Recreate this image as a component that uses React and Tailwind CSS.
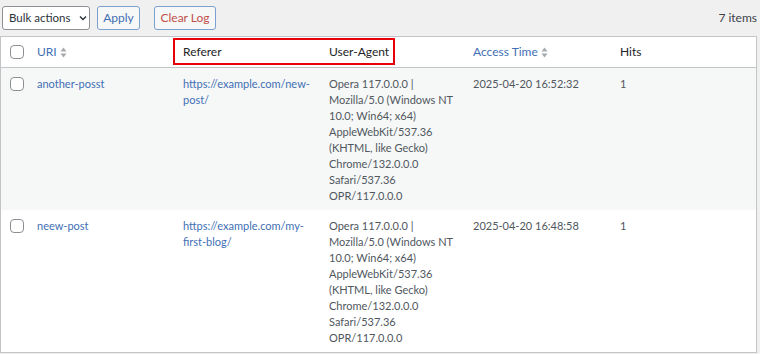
import React from "react";

const ua = [
  "Opera 117.0.0.0 |",
  "Mozilla/5.0 (Windows NT",
  "10.0; Win64; x64)",
  "AppleWebKit/537.36",
  "(KHTML, like Gecko)",
  "Chrome/132.0.0.0",
  "Safari/537.36",
  "OPR/117.0.0.0",
];

const rows = [
  { uri: "another-posst", ref: ["https://example.com/new-", "post/"], time: "2025-04-20 16:52:32", hits: "1", bg: "bg-[#f6f7f7]" },
  { uri: "neew-post", ref: ["https://example.com/my-", "first-blog/"], time: "2025-04-20 16:48:58", hits: "1", bg: "bg-white" },
];

function Check() {
  return <span className="block w-[14px] h-[14px] rounded-[4px] border border-[#8c8f94] bg-white" />;
}

function Sort() {
  return (
    <svg width="7" height="11" viewBox="0 0 7 11" className="inline-block ml-[3px]">
      <path d="M3.5 0.5 L6.5 4.5 H0.5 Z" fill="#a7aaad" />
      <path d="M3.5 10.5 L6.5 6.5 H0.5 Z" fill="#a7aaad" />
    </svg>
  );
}

export default function App() {
  return (
    <div className="w-[760px] h-[354px] overflow-hidden bg-[#f0f0f1] text-[#50575e]" style={{ fontFamily: "Lato, 'Liberation Sans', sans-serif" }}>
      <div className="flex items-center h-[36px] pl-[2px] pr-[3px]">
        <div className="flex items-center w-[88px] h-[24px] border border-[#8c8f94] rounded-[3px] bg-white pl-[6px] text-[11.5px] text-[#2c3338]">
          <span>Bulk actions</span>
          <svg width="8" height="6" viewBox="0 0 8 6" className="ml-[9px]"><path d="M1 1.5 L4 4.5 L7 1.5" stroke="#2c3338" strokeWidth="1.4" fill="none" /></svg>
        </div>
        <div className="ml-[7px] flex items-center justify-center w-[43px] h-[24px] border border-[#7b9fd0] rounded-[3px] bg-[#f6f7f7] text-[12px] text-[#3f6fb4]">Apply</div>
        <div className="ml-[14px] flex items-center justify-center w-[62px] h-[24px] border border-[#7b9fd0] rounded-[3px] bg-[#f6f7f7] text-[12px] text-[#c0504a]">Clear Log</div>
        <div className="ml-auto text-[12px] text-[#3c434a]">7 items</div>
      </div>
      <div className="relative w-[757px] border border-[#c3c4c7] bg-white">
        <table className="w-full table-fixed border-collapse text-[11px]">
          <colgroup>
            <col className="w-[26px]" />
            <col className="w-[146px]" />
            <col className="w-[146px]" />
            <col className="w-[144px]" />
            <col className="w-[147px]" />
            <col />
          </colgroup>
          <thead>
            <tr className="h-[30px] border-b border-[#c3c4c7] text-[12px]">
              <td className="pl-[9px] align-middle"><Check /></td>
              <td className="pl-[10px] text-[#3f6fb4]">URI<Sort /></td>
              <td className="pl-[10px] text-[#1d2327]">Referer</td>
              <td className="pl-[10px] text-[#1d2327]">User-Agent</td>
              <td className="pl-[10px] text-[#3f6fb4]">Access Time<Sort /></td>
              <td className="pl-[10px] text-[#1d2327]">Hits</td>
            </tr>
          </thead>
          <tbody>
            {rows.map((r, i) => (
              <tr key={i} className={r.bg}>
                <td className="pl-[9px] pt-[9px] align-top"><Check /></td>
                <td className="pl-[10px] pt-[8px] pb-[6px] align-top leading-[16px] text-[#3f6fb4]">{r.uri}</td>
                <td className="pl-[10px] pt-[8px] pb-[6px] align-top leading-[16px] text-[#3f6fb4]">
                  {r.ref.map((l, j) => <div key={j}>{l}</div>)}
                </td>
                <td className="pl-[10px] pt-[8px] pb-[6px] align-top leading-[16px] whitespace-nowrap">
                  {ua.map((l, j) => <div key={j}>{l}</div>)}
                </td>
                <td className="pl-[10px] pt-[8px] pb-[6px] align-top leading-[16px]">{r.time}</td>
                <td className="pl-[10px] pt-[8px] pb-[6px] align-top leading-[16px]">{r.hits}</td>
              </tr>
            ))}
          </tbody>
        </table>
        <div className="absolute left-[172px] top-[1px] w-[222px] h-[27px] border-2 border-[#e8000b] pointer-events-none" />
      </div>
    </div>
  );
}
